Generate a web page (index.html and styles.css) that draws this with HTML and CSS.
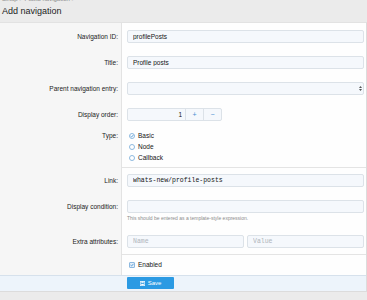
FILE: index.html
```html
<!DOCTYPE html>
<html lang="en">
<head>
  <meta charset="UTF-8" />
  <title>Add navigation</title>
  <link rel="stylesheet" href="styles.css">
</head>
<body>
  <div class="header">
    <div class="crumbs">Setup &gt; Public navigation &gt;</div>
    <h1>Add navigation</h1>
  </div>

  <form class="block">
    <div class="row first">
      <label class="label">Navigation ID:</label>
      <div class="field"><input class="input" type="text" value="profilePosts"></div>
    </div>

    <div class="row">
      <label class="label">Title:</label>
      <div class="field"><input class="input" type="text" value="Profile posts"></div>
    </div>

    <div class="row">
      <label class="label">Parent navigation entry:</label>
      <div class="field">
        <div class="input select">
          <svg class="arrows" width="3" height="5" viewBox="0 0 3 5"><path d="M0 2 L1.5 0 L3 2 Z M0 3 L1.5 5 L3 3 Z" fill="#555"/></svg>
        </div>
      </div>
    </div>

    <div class="row">
      <label class="label">Display order:</label>
      <div class="field">
        <div class="spinner">
          <input class="input num" type="text" value="1">
          <span class="step">+</span>
          <span class="step">&minus;</span>
        </div>
      </div>
    </div>

    <div class="row sep">
      <label class="label type-label">Type:</label>
      <div class="field choices">
        <div class="choice"><span class="radio on"><svg width="4" height="4" viewBox="0 0 4 4"><path d="M0.5 2 L1.6 3 L3.5 0.8" fill="none" stroke="#3b8fd6" stroke-width="0.8"/></svg></span>Basic</div>
        <div class="choice"><span class="radio"></span>Node</div>
        <div class="choice"><span class="radio"></span>Callback</div>
      </div>
    </div>

    <div class="row">
      <label class="label">Link:</label>
      <div class="field"><input class="input mono" type="text" value="whats-new/profile-posts"></div>
    </div>

    <div class="row">
      <label class="label">Display condition:</label>
      <div class="field">
        <input class="input" type="text">
        <div class="hint">This should be entered as a template-style expression.</div>
      </div>
    </div>

    <div class="row sep extra">
      <label class="label">Extra attributes:</label>
      <div class="field pair">
        <input class="input mono" type="text" placeholder="Name">
        <input class="input mono" type="text" placeholder="Value">
      </div>
    </div>

    <div class="row">
      <div class="label"></div>
      <div class="field check-field">
        <div class="choice"><span class="checkbox"><svg width="4" height="4" viewBox="0 0 4 4"><path d="M0.5 2 L1.6 3 L3.5 0.8" fill="none" stroke="#3b8fd6" stroke-width="0.8"/></svg></span>Enabled</div>
      </div>
    </div>

    <div class="footer">
      <button class="save" type="button">
        <svg width="5" height="5" viewBox="0 0 5 5"><rect x="0.3" y="0.3" width="4.4" height="4.4" fill="none" stroke="#fff" stroke-width="0.6"/><rect x="1.3" y="0.3" width="2.4" height="1.5" fill="#fff"/><rect x="1.2" y="2.8" width="2.6" height="1.6" fill="#fff"/></svg>
        Save
      </button>
    </div>
  </form>
</body>
</html>
```

FILE: styles.css
```css
* {
  box-sizing: border-box;
}

body {
  margin: 0;
  background: #ebebeb;
  font-family: 'Liberation Sans', Arial, sans-serif;
  font-size: 6.5px;
  color: #141414;
}

.header {
  height: 22px;
  padding-left: 2px;
  overflow: hidden;
}

.crumbs {
  margin-top: -4px;
  height: 7px;
  line-height: 7px;
  color: #8a8a8a;
  font-size: 6px;
}

h1 {
  margin: 0;
  padding-top: 2px;
  font-size: 9px;
  font-weight: normal;
  line-height: 12px;
  color: #1d1d1d;
}

.block {
  margin: 0;
  background: #fefefe;
  border: 1px solid #dcdcdc;
  border-left: none;
  border-top-color: #e2e2e2;
}

.row {
  display: grid;
  grid-template-columns: 122px 1fr;
}

.label {
  background: #f6f6f6;
  border-right: 1px solid #e3e3e3;
  text-align: right;
  padding: 9px 3px 0 0;
  color: #222;
}

.field {
  padding: 6px 2px 7px 5px;
}

.row.first .label,
.row.extra .label {
  padding-top: 10px;
}

.row.first .field,
.row.extra .field {
  padding-top: 7px;
}

.row.extra .field {
  padding-bottom: 6px;
}

.row.sep .field {
  border-bottom: 1px solid #e4e4e4;
}

.input {
  display: block;
  width: 100%;
  height: 13px;
  margin: 0;
  padding: 0 5px;
  background: #f5f8fc;
  border: 1px solid #dce2e8;
  border-radius: 2px;
  font-family: 'Liberation Sans', Arial, sans-serif;
  font-size: 6.5px;
  color: #141414;
  outline: none;
}

.input.mono {
  font-family: 'Liberation Mono', 'DejaVu Sans Mono', monospace;
  font-size: 6.5px;
}

.input::placeholder {
  color: #b0b5bb;
}

.select {
  display: flex;
  align-items: center;
  justify-content: flex-end;
  padding-right: 1px;
}

.spinner {
  display: flex;
  width: 95px;
  height: 13px;
  border: 1px solid #dce2e8;
  border-radius: 2px;
  background: #f5f8fc;
}

.spinner .num {
  flex: 1;
  height: 11px;
  border: none;
  text-align: right;
  padding-right: 3px;
}

.step {
  width: 18px;
  border-left: 1px solid #dce2e8;
  color: #4b8fd1;
  text-align: center;
  line-height: 11px;
  font-size: 7px;
}

.label.type-label {
  padding-top: 4px;
}

.choices {
  padding-top: 2px;
  padding-bottom: 4px;
}

.choice {
  display: flex;
  align-items: center;
  height: 11px;
  padding-left: 2px;
}

.radio,
.checkbox {
  display: inline-flex;
  align-items: center;
  justify-content: center;
  width: 6px;
  height: 6px;
  margin-right: 3px;
  border: 0.7px solid #8db9e0;
  border-radius: 50%;
  background: #fff;
}

.checkbox {
  border-radius: 1px;
  background: #e4eef8;
}

.hint {
  margin-top: 2px;
  color: #8c8c8c;
  font-size: 5px;
  line-height: 6px;
}

.pair {
  display: flex;
  gap: 3px;
}

.check-field {
  padding-top: 4px;
  padding-bottom: 5px;
}

.footer {
  background: #edf4fb;
  border-top: 1px solid #d6e1ec;
  padding: 1px 0 2px 127px;
}

.save {
  display: flex;
  align-items: center;
  justify-content: center;
  gap: 3px;
  width: 47px;
  height: 12px;
  margin: 0;
  padding: 0;
  background: #2b9ae3;
  border: none;
  border-radius: 1px;
  color: #fff;
  font-family: 'Liberation Sans', Arial, sans-serif;
  font-size: 6px;
}
```
